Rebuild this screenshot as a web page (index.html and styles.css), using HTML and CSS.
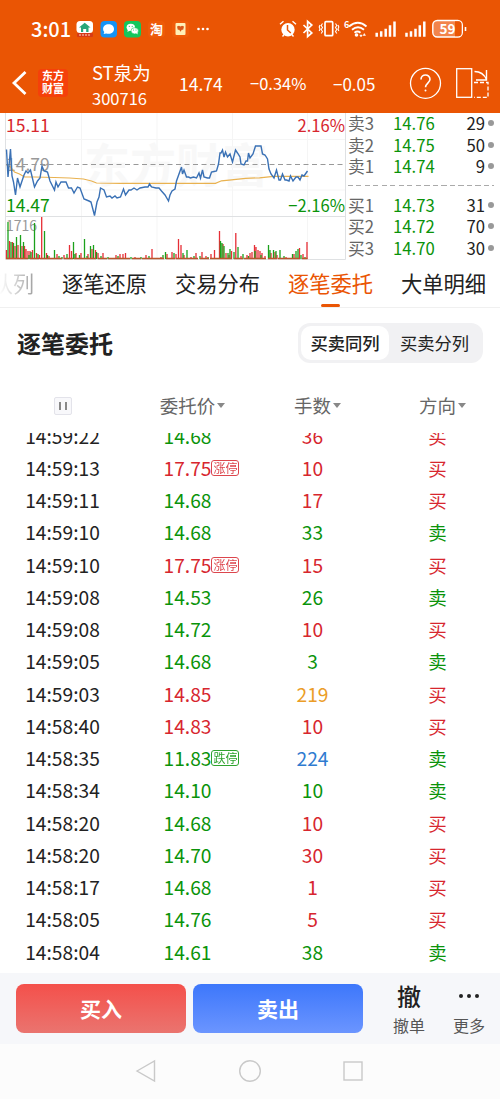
FILE: index.html
```html
<!DOCTYPE html>
<html lang="zh-CN">
<head>
<title>ST泉为 300716</title>
<meta charset="UTF-8">
<meta name="viewport" content="width=device-width, initial-scale=1.0">
<link rel="stylesheet" href="styles.css">
</head>
<body>

<header class="top">
  <div class="status">
    <span class="clock">3:01</span>
    <svg class="apps" width="136" height="18" viewBox="76 20 136 18">
      <rect x="76.500" y="21" width="16.500" height="12" rx="3.500" fill="#fff"/>
      <path d="M79 27.500l5.700-4.700 5.800 4.700h-2v4.500h-2.300v-3h-3v3H81v-4.500z" fill="#28a77b"/>
      <rect x="77" y="33" width="16" height="4" rx="1" fill="#d83a16"/>
      <path d="M79 35h12" stroke="#ffd9c8" stroke-dasharray="2 1"/>
      <rect x="100.500" y="21" width="16.500" height="16.500" rx="4" fill="#1593f5"/>
      <path d="M108.600 24.300c3.200 0 5.400 2 5.400 4.700s-2.200 4.800-5.400 4.800c-.9 0-1.700-.1-2.400-.4l-2.600.6.7-2c-.8-.8-1.200-1.800-1.200-3 0-2.700 2.300-4.700 5.500-4.700z" fill="#fff"/>
      <rect x="124" y="21" width="17" height="16.500" rx="4" fill="#13c75c"/>
      <ellipse cx="130.800" cy="27.300" rx="4.200" ry="3.600" fill="#fff"/>
      <path d="M128 29l-.6 3 2.600-1.600z" fill="#fff"/>
      <ellipse cx="134.700" cy="30.800" rx="3.700" ry="3.100" fill="#fff" stroke="#13c75c" stroke-width=".6"/>
      <path d="M136 33l1.600 1.600-.2-2.800z" fill="#fff"/>
      <g fill="#13c75c"><circle cx="129.300" cy="26.300" r=".6"/><circle cx="132.200" cy="26.300" r=".6"/><circle cx="133.500" cy="30" r=".5"/><circle cx="136" cy="30" r=".5"/></g>
      <rect x="148" y="21" width="17" height="16.500" rx="4" fill="#ee5a09"/>
      <text x="156.500" y="34" class="tao">淘</text>
      <rect x="172" y="21" width="17" height="16.500" rx="4" fill="#ef5b09"/>
      <rect x="175.500" y="23" width="10" height="12" rx="1" fill="#fff0b8"/>
      <path d="M177 26.500l2-.8 1.500.8 1.500-.8 2 .8-.8 3.300h-1.400l-1.300 2-1.300-2h-1.400z" fill="#d9571a"/>
      <g fill="#fff"><circle cx="198.500" cy="29" r="1.300"/><circle cx="203" cy="29" r="1.300"/><circle cx="207.500" cy="29" r="1.300"/></g>
    </svg>
    <svg class="signals" width="190" height="20" viewBox="278 19 190 20">
      <circle cx="288" cy="29.700" r="6.700" fill="#fff"/>
      <path d="M280 24.200l3.500-3M296 24.200l-3.500-3M282.500 36.500l1.500-1.700M293.500 36.500l-1.500-1.700" stroke="#fff" stroke-width="1.400"/>
      <path d="M287.500 25v5l3.300 3" fill="none" stroke="#ea5504" stroke-width="1.500"/>
      <path d="M303.500 25l8.300 8-4.200 3.700V21.300l4.200 3.700-8.300 8" fill="none" stroke="#fff" stroke-width="1.700"/>
      <rect x="325" y="21.700" width="7.700" height="14" rx="1" fill="none" stroke="#fff" stroke-width="1.700"/>
      <path d="M322.500 23.500l-1.300 2 1.300 2-1.300 2 1.300 2-1.300 2M320 25l-.8 2 .8 2-.8 2M335.500 23.500l1.300 2-1.300 2 1.300 2-1.300 2 1.300 2M338 25l.8 2-.8 2 .8 2" fill="none" stroke="#fff" stroke-width="1.100"/>
      <text x="344" y="27.500" class="wifi6">6</text>
      <path d="M349 26.500q9-7.500 17.500 0M352 29.800q6-5 12 0M354.500 32.800q3-2.400 6 0" fill="none" stroke="#fff" stroke-width="1.900"/>
      <circle cx="356.500" cy="35" r="1.800" fill="#fff"/>
      <path d="M361 37l-1.200-2h2.400zM364.300 33.500l-1.200 2h2.400z" fill="#fff" stroke="#fff" stroke-width=".5"/>
      <path id="bars" d="M376.700 36.700v-4M381.200 36.700v-5.500M385.700 36.700v-8M390 36.700v-11.500M394.500 36.700V21.500" stroke="#fff" stroke-width="2.500"/>
      <use href="#bars" x="29.800"/>
      <rect x="432.800" y="20.500" width="29.500" height="16.500" rx="4.500" fill="#f2844b" stroke="#fff" stroke-width="1.400"/>
      <path d="M455 21.200h3.500a3 3 0 0 1 3 3v9a3 3 0 0 1-3 3H455z" fill="#ea5504"/>
      <path d="M465.500 27v4" stroke="#fff" stroke-width="1.600"/>
      <text x="447.500" y="34" class="battery">59</text>
    </svg>
  </div>
  <div class="stock-bar">
    <svg class="back" width="16" height="26" viewBox="0 0 16 26"><path d="M14.500 2L3 13l11.500 11" fill="none" stroke="#fff" stroke-width="2.800"/></svg>
    <div class="logo">东方<br>财富</div>
    <div class="name">ST泉为<small>300716</small></div>
    <span class="price">14.74</span>
    <span class="percent">−0.34%</span>
    <span class="change">−0.05</span>
    <svg class="tools" width="80" height="34" viewBox="409 66 80 34" fill="none" stroke="#fff" stroke-width="1.300">
      <circle cx="425.500" cy="83.300" r="15"/>
      <path d="M421 79.500c0-6 9-6 9-.2 0 3.700-4.500 4-4.500 8" stroke-width="1.600"/>
      <circle cx="425.500" cy="90.500" r="1" fill="#fff" stroke="none"/>
      <rect x="456.700" y="68.700" width="15" height="28.600"/>
      <path d="M474.500 71.500q8.500 0 12 8M486.500 70v10H476" stroke-width="1.400"/>
      <path d="M474 82.500h14v14.800h-14" stroke-dasharray="4 2"/>
    </svg>
  </div>
</header>

<section class="quote">
  <svg class="chart" width="346" height="149" viewBox="0 113 346 149">
    <path d="M6 139.500h339M6 190h339M81.500 113v146M157 113v146M232.500 113v146M307.500 113v146" stroke="#f5f5f5"/>
    <text x="84" y="182" class="watermark">东方财富</text>
    <path d="M5.500 113v146.500H345.500V113M5.500 216.500h340" fill="none" stroke="#dfe1e3"/>
    <path d="M6 164.500h339" stroke="#999" stroke-dasharray="5 3.500"/>
    <text x="6" y="171" class="grey">14.79</text>
    <text x="6" y="231" class="vol">1716</text>
    <g fill="none" stroke-width="1.300">
      <path d="M6.500 259v-9M9.500 259v-18M12.500 259v-17M15 259v-13M18 259v-14M22 259v-13M24.500 259v-13M26 259v-10M28 259v-8M30 259v-8M32.500 259v-9M36.500 259v-6M39.500 259v-4M41.700 259V217M46.500 259v-6M49 259v-3M57 259v-5M64 259v-4M69.500 259v-14M71.500 259v-8M76 259v-6M81 259v-6M88 259v-5M92 259v-10M95.500 259v-9M98 259v-6M103 259v-6M116 259v-4M120 259v-5M123 259v-5M125.500 259v-6M135 259v-2M146 259v-4M152 259v-10M161 259v-2M167 259v-5M172 259v-7M176 259v-5M178.500 259v-20M181 259v-14M184 259v-4M191 259v-2M196 259v-6M202 259v-7M206 259v-3M211 259v-5M214.500 259v-9M219.500 259v-28M223 259v-15M226 259v-6M229 259v-4M231.500 259v-8M235.800 259v-26M241 259v-3M247 259v-4M250 259v-6M252 259v-7M254.500 259v-14M256 259v-12M258 259v-9M260 259v-8M262 259v-6M265 259v-3M271 259v-6M275 259v-7M277 259v-4M286 259v-2M294 259v-5M299.500 259v-11M303 259v-5M307 259v-17" stroke="#e62e36"/>
      <path d="M8 259v-37M11 259v-17M13.500 259v-16M16.500 259v-22M20.500 259v-24M23.500 259v-17M29 259v-4M31 259v-7M34.500 259v-36M38 259v-5M44.500 259v-28M47.500 259v-4M54.500 259v-9M59 259v-3M62 259v-2M67 259v-5M73.500 259v-17M75 259v-5M79.500 259v-4M84.500 259v-20M87 259v-3M90.500 259v-13M93.500 259v-14M96.500 259v-7M101 259v-3M108 259v-2M118 259v-3M131 259v-2M141 259v-2M149 259v-3M163 259v-4M165.500 259v-7M174 259v-6M183 259v-6M187 259v-9M194 259v-3M200 259v-3M208 259v-2M220.500 259v-18M222 259v-16M224 259v-13M228 259v-6M230 259v-10M234 259v-7M238 259v-12M243 259v-5M248.500 259v-3M255 259v-8M261 259v-4M268.500 259v-14M270 259v-9M273.500 259v-9M276 259v-8M280 259v-9M284 259v-3M292.500 259v-5M296 259v-8M298 259v-10M301 259v-4M305 259v-2" stroke="#1ba11b"/>
      <path d="M6 258.500h301.500" stroke="#b9562b" stroke-dasharray="22 2 9 1"/>
    </g>
    <path d="M6.500 165l4 2 4 5 5 2 5 3 10 0 20 .5 15 .5 14 1 8 2 5 2 24 .3 50 0h45l6-2.500 10-1 14-1.500 14-.5 14-1.500h35" fill="none" stroke="#e9b250" stroke-width="1.200"/>
    <path d="M6.500 149.500L8 177l2.500-28 1.500 27 1.500 6 2 13 2-17 2.500 9 4-12 2-4 2 2 2.500-3 4 17 3-6 2.500-3 2-12 2 5 3.500 1 2.500 9 4.500 9 1.500-8 2 5 3-5h5l2.500 6h3l2.500 5 3.500-6 2.500 1 4 11 5 2 2 1 3.500 13.500L97 202l2-5 1.500-9 3.500 2 2.500 7 3.500-1 2 2 3-2 2 2 3.500-1 3-8 2 6 3.500-5h2l3-2 3 2 3-2 5-1h3l1.500-3 2 3 4.500 1h3l2.500 3 3.500 4 3.500 6 1.500-6 2-4 3-2 1.500-8 5-14 1 7 1.500-4 2.500 7h2l2 1 3-1 3 1 2.500-5 1.500 5 2-8 1.500 7 3.500 1h2l2-6 2.500-.5 2.500-.5 2-7 1.500-11h1l1.500-3 1.500 7 1.500-5 2 5 2.500-3 2.500 8 3-12 2 3 2.500 4 1 7 3 1 2-4h1.500l1-8 1.500 5 3-4 2.500-8h5.500l1.500 8 2.500 1 2.500 4 1.500 10 2 5 3 4 2.500-8 2.500 10h1.500l2-6 2.500 6h1.500l2.500 1 1.500-5 2.500 5 3-4h2l2 3 2-5 2 1 3.500-5" fill="none" stroke="#3a71b5" stroke-width="1.400"/>
    <text x="6" y="131.500" class="red">15.11</text>
    <text x="6" y="211.500" class="green">14.47</text>
    <text x="345" y="131.500" class="red end">2.16%</text>
    <text x="345" y="211.500" class="green end">−2.16%</text>
  </svg>
  <div class="book">
    <div class="level"><span>卖3</span><b>14.76</b><em>29</em></div>
    <div class="level"><span>卖2</span><b>14.75</b><em>50</em></div>
    <div class="level"><span>卖1</span><b>14.74</b><em>9</em></div>
    <div class="divider"></div>
    <div class="level"><span>买1</span><b>14.73</b><em>31</em></div>
    <div class="level"><span>买2</span><b>14.72</b><em>70</em></div>
    <div class="level"><span>买3</span><b>14.70</b><em>30</em></div>
  </div>
</section>

<nav class="tabs">
  <a class="tab faded">委托队列</a>
  <a class="tab">逐笔还原</a>
  <a class="tab">交易分布</a>
  <a class="tab active">逐笔委托</a>
  <a class="tab">大单明细</a>
</nav>

<main>
  <div class="title-row">
    <h2>逐笔委托</h2>
    <div class="toggle">
      <span class="on">买卖同列</span>
      <span>买卖分列</span>
    </div>
  </div>
  <div class="row head">
    <div><i class="pause"></i></div>
    <div><span class="sort">委托价</span></div>
    <div><span class="sort">手数</span></div>
    <div><span class="sort">方向</span></div>
  </div>
  <div class="list" id="list"></div>
</main>

<footer>
  <div class="actions">
    <button class="buy">买入</button>
    <button class="sell">卖出</button>
    <div class="action"><strong>撤</strong>撤单</div>
    <div class="action"><strong class="dots"><i></i><i></i><i></i></strong>更多</div>
  </div>
  <div class="system">
    <svg width="22" height="24" viewBox="0 0 22 24"><path d="M2 12L19.500 2v20z"/></svg>
    <svg width="24" height="24" viewBox="0 0 24 24"><circle cx="12" cy="12" r="10.300"/></svg>
    <svg width="22" height="24" viewBox="0 0 22 24"><rect x="2" y="3" width="18" height="18"/></svg>
  </div>
</footer>

<script>
// time, price, price colour, lots, lots colour, side, limit tag
const orders = [
  ['14:59:22', '14.68', 'green', '36', 'red', '买'],
  ['14:59:13', '17.75', 'red', '10', 'red', '买', '涨停'],
  ['14:59:11', '14.68', 'green', '17', 'red', '买'],
  ['14:59:10', '14.68', 'green', '33', 'green', '卖'],
  ['14:59:10', '17.75', 'red', '15', 'red', '买', '涨停'],
  ['14:59:08', '14.53', 'green', '26', 'green', '卖'],
  ['14:59:08', '14.72', 'green', '10', 'red', '买'],
  ['14:59:05', '14.68', 'green', '3', 'green', '卖'],
  ['14:59:03', '14.85', 'red', '219', 'orange', '买'],
  ['14:58:40', '14.83', 'red', '10', 'red', '买'],
  ['14:58:35', '11.83', 'green', '224', 'blue', '卖', '跌停'],
  ['14:58:34', '14.10', 'green', '10', 'green', '卖'],
  ['14:58:20', '14.68', 'green', '10', 'red', '买'],
  ['14:58:20', '14.70', 'green', '30', 'red', '买'],
  ['14:58:17', '14.68', 'green', '1', 'red', '买'],
  ['14:58:05', '14.76', 'green', '5', 'red', '买'],
  ['14:58:04', '14.61', 'green', '38', 'green', '卖']
];

document.getElementById('list').innerHTML = orders.map(o => `
  <div class="row">
    <div>${o[0]}</div>
    <div class="${o[2]}"><span class="value">${o[1]}${o[6] ? `<small class="tag">${o[6]}</small>` : ''}</span></div>
    <div class="${o[4]}">${o[3]}</div>
    <div class="side ${o[5] === '买' ? 'red' : 'green'}">${o[5]}</div>
  </div>`).join('');
</script>

</body>
</html>
```
FILE: styles.css
```css
* {
  box-sizing: border-box;
}

body {
  margin: 0;
  width: 500px;
  height: 1099px;
  overflow: hidden;
  display: flex;
  flex-direction: column;
  background: #fff;
  color: #222;
  font-family: "Noto Sans CJK SC", sans-serif;
}

.red { color: #d7262e; fill: #d7262e; }
.green { color: #0a930a; fill: #0a930a; }
.orange { color: #eb9d27; }
.blue { color: #2e7bd0; }

/* header */
.top {
  height: 113px;
  background: #ea5504;
  color: #fff;
}

.status {
  display: flex;
  align-items: center;
  height: 58px;
  padding-left: 31px;
}

.clock {
  width: 45px;
  padding-bottom: 2px;
  font-size: 20px;
  font-weight: 500;
}

.signals {
  margin-left: 66px;
}

.tao {
  font-size: 13px;
  font-weight: bold;
  fill: #fff;
  text-anchor: middle;
}

.wifi6 {
  font-size: 9px;
  font-weight: bold;
  fill: #fff;
}

.battery {
  font-size: 13.5px;
  font-weight: bold;
  fill: #fff;
  text-anchor: middle;
}

.stock-bar {
  display: flex;
  align-items: center;
  height: 50px;
  padding-left: 11px;
  font-size: 17.5px;
}

.logo {
  width: 30px;
  height: 28px;
  margin: 0 24px 0 11px;
  border-radius: 4px;
  background: #f5400a;
  font: bold 11px/13px "Noto Sans CJK SC", sans-serif;
  text-align: center;
}

.name {
  width: 87px;
  font-size: 18.5px;
  line-height: 26px;
  padding-top: 3px;
}

.name small {
  display: block;
  font-size: 16.5px;
}

.price { width: 71px; }
.percent { width: 83px; font-size: 16.5px; }
.change { width: 76px; font-size: 17px; }

/* quote */
.quote {
  display: flex;
  height: 149px;
}

.chart text {
  font-size: 17.5px;
}

.chart .grey,
.chart .vol {
  fill: #999;
}

.chart .vol {
  font-size: 14px;
}

.chart .watermark {
  font-size: 46px;
  font-weight: bold;
  fill: #f8f8f8;
}

.chart .end {
  font-size: 16.6px;
  text-anchor: end;
}

.book {
  flex: 1;
  padding: 0 6px 0 2px;
  font-size: 16.7px;
}

.level {
  display: flex;
  align-items: center;
  height: 21.5px;
  line-height: 20px;
  padding-bottom: 1px;
}

.level span {
  width: 45px;
  color: #666;
}

.level b {
  width: 50px;
  color: #0a930a;
  font-weight: normal;
}

.level em {
  flex: 1;
  font-style: normal;
  text-align: right;
}

.level::after {
  content: "";
  width: 6px;
  height: 6px;
  margin-left: 3px;
  border-radius: 50%;
  background: #999;
}

.divider {
  height: 1px;
  margin: 7px 0 9px;
  background: repeating-linear-gradient(90deg, #aaa 0 5px, transparent 5px 8.5px);
}

/* tabs */
.tabs {
  display: flex;
  height: 46px;
  margin-left: -65px;
  border-bottom: 1px solid #f0f0f0;
}

.tab {
  position: relative;
  flex: 0 0 113px;
  font-size: 21.3px;
  line-height: 42px;
  text-align: center;
}

.faded {
  color: transparent;
  background: linear-gradient(90deg, #fff 57%, #999 90%);
  background-clip: text;
  -webkit-background-clip: text;
}

.active {
  color: #ea5504;
}

.active::after {
  content: "";
  position: absolute;
  left: 47px;
  bottom: 0;
  width: 19px;
  height: 3px;
  border-radius: 2px;
  background: #ea5504;
}

/* orders */
.title-row {
  display: flex;
  justify-content: space-between;
  align-items: center;
  height: 70px;
  padding: 0 17px;
}

h2 {
  margin: 0;
  padding-bottom: 2px;
  font-size: 24px;
}

.toggle {
  display: flex;
  width: 185px;
  height: 40px;
  padding: 3px;
  border-radius: 12px;
  background: #f1f1f3;
  font-size: 17.3px;
  line-height: 33px;
  text-align: center;
}

.toggle span {
  flex: 1;
}

.toggle .on {
  flex: 0 0 88px;
  border-radius: 10px;
  background: #fff;
  font-weight: 500;
}

.row {
  display: grid;
  grid-template-columns: repeat(4, 125px);
  align-items: center;
  height: 32.25px;
  font-size: 19.2px;
  line-height: 31px;
  text-align: center;
}

.head {
  height: 55px;
  color: #666;
  font-size: 18.5px;
}

.pause {
  display: block;
  width: 18px;
  height: 18px;
  margin: 0 auto;
  border: 1px solid #e3e3ea;
  border-radius: 2px;
  background: linear-gradient(90deg, transparent 4px, #888 4px 6px, transparent 6px 10px, #888 10px 12px, transparent 12px) 0 4px / 100% 8px no-repeat #f8f8fb;
}

.sort,
.value {
  position: relative;
}

.sort::after {
  content: "";
  position: absolute;
  left: calc(100% + 2px);
  top: 11px;
  border: 4.5px solid transparent;
  border-top: 5px solid #888;
  border-bottom: 0;
}

.list {
  height: 540px;
  overflow: hidden;
}

.list .row:first-child {
  margin-top: -13px;
}

.tag {
  position: absolute;
  left: 100%;
  top: 6px;
  width: 28px;
  height: 16px;
  border: 1px solid;
  border-radius: 3px;
  font-size: 12px;
  line-height: 13px;
  opacity: 0.85;
}

.side {
  font-size: 18.5px;
  line-height: 30px;
  padding-bottom: 1px;
}

/* bottom */
.actions {
  display: flex;
  align-items: center;
  height: 71px;
  padding-left: 16px;
  background: #f6f7fa;
}

button {
  width: 170px;
  height: 49px;
  margin-right: 7px;
  padding-bottom: 3px;
  border: 0;
  border-radius: 8px;
  color: #fff;
  font: bold 21px "Noto Sans CJK SC", sans-serif;
}

.buy { background: linear-gradient(#f4504b, #ea746f); }
.sell { background: linear-gradient(#3d77fb, #6b95ff); margin-right: 16px; }

.action {
  width: 60px;
  color: #555;
  font-size: 16px;
  line-height: 24px;
  text-align: center;
}

.action strong {
  display: block;
  height: 32px;
  color: #222;
  font-size: 24px;
  font-weight: 500;
  line-height: 30px;
}

.action .dots {
  display: flex;
  justify-content: center;
  gap: 4px;
  padding-top: 13px;
}

.dots i {
  width: 4px;
  height: 4px;
  border-radius: 50%;
  background: #222;
}

.system {
  display: flex;
  justify-content: space-between;
  height: 55px;
  padding: 15px 136px 0 135px;
  background: #fcfcfc;
}

.system svg {
  fill: none;
  stroke: #c9c9c9;
  stroke-width: 1.4;
}
```
